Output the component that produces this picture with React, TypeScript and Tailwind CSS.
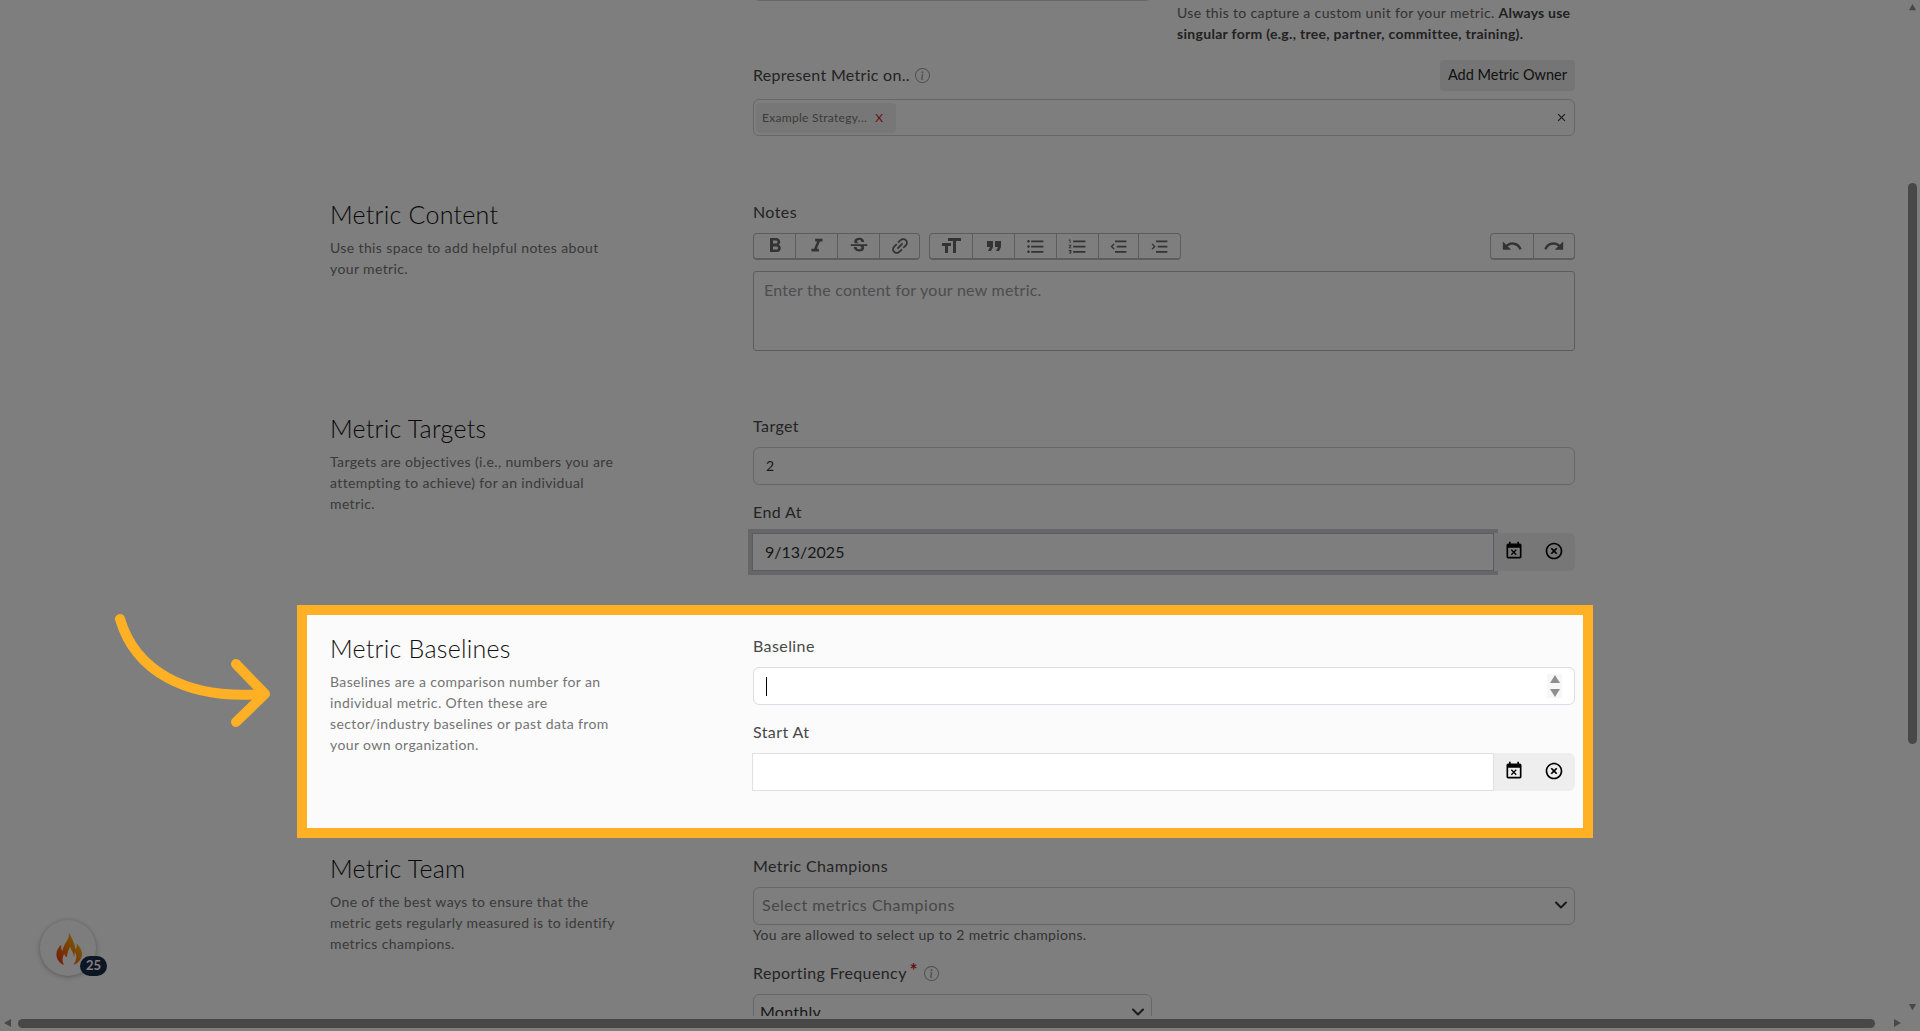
import type { ReactNode } from "react";
import { BsInfoCircle } from "react-icons/bs";
import {
  MdClose,
  MdEventBusy,
  MdFormatBold,
  MdFormatItalic,
  MdFormatListBulleted,
  MdFormatListNumbered,
  MdFormatQuote,
  MdFormatSize,
  MdHighlightOff,
  MdLink,
  MdRedo,
  MdStrikethroughS,
  MdUndo,
} from "react-icons/md";

function Section({
  title,
  lines,
  highlight,
  children,
}: {
  title: string;
  lines: string[];
  highlight?: boolean;
  children: ReactNode;
}) {
  return (
    <section
      className={
        highlight
          ? "relative z-20 mb-[7px] flex bg-[#fbfbfb] pb-[37px] pl-[23px] pr-[8px] pt-[19px] shadow-[0_0_0_10px_#ffb024]"
          : "mb-[7px] flex pb-[37px] pl-[23px] pr-[8px] pt-[19px]"
      }
    >
      <div className="w-[423px] shrink-0">
        <h2 className="text-[25px] font-light leading-[28px] tracking-[0.25px] text-[#111111]">{title}</h2>
        <p className="mt-[9px] text-[14px] leading-[21px] tracking-[0.38px] text-[#747474]">
          {lines.map((l) => (
            <span key={l} className="block whitespace-nowrap">
              {l}
            </span>
          ))}
        </p>
      </div>
      <div className="min-w-0 flex-1">{children}</div>
    </section>
  );
}

function Label({ children, className = "" }: { children: ReactNode; className?: string }) {
  return (
    <div className={`flex h-[24px] items-center text-[16px] tracking-[0.4px] text-[#484848] ${className}`}>
      {children}
    </div>
  );
}

function Chevron() {
  return (
    <svg width="16" height="16" viewBox="0 0 16 16" fill="none" stroke="#333" strokeWidth="2" strokeLinecap="round" strokeLinejoin="round">
      <path d="m3 5.5 5 5 5-5" />
    </svg>
  );
}

function DateRow({ value, focused }: { value?: string; focused?: boolean }) {
  return (
    <div className="mt-[9px] ml-[-1px] flex h-[38px]">
      <div
        className={
          focused
            ? "flex flex-1 items-center border border-[#b4b4c0] pb-[1px] pl-[12px] text-[16px] text-[#333333] outline-4 outline-solid outline-[#cccccc]"
            : "flex flex-1 items-center border border-[#dfe0e6] bg-white pl-[12px]"
        }
      >
        {value}
      </div>
      <div className="relative flex w-[81px] items-center rounded-r-[6px] bg-[#eeeeee] pb-[2px] text-black">
        <MdEventBusy className="ml-[10px] h-[20px] w-[20px]" />
        <MdHighlightOff className="ml-[20px] h-[20px] w-[20px]" />
      </div>
    </div>
  );
}

function ToolGroup({ cells, className = "" }: { cells: { w: number; icon: ReactNode }[]; className?: string }) {
  return (
    <div className={`flex h-[27px] rounded-[4px] border border-b-2 border-[#bbbbbb] text-[#666666] ${className}`}>
      {cells.map((c, i) => (
        <div
          key={i}
          style={{ width: c.w }}
          className="flex items-center justify-center border-r border-[#bbbbbb] last:border-r-0"
        >
          {c.icon}
        </div>
      ))}
    </div>
  );
}

function NestIcon({ increase }: { increase?: boolean }) {
  return (
    <svg width="21" height="21" viewBox="0 0 24 24" fill="currentColor">
      <path d="M8 5h13v2H8zM10 11h11v2H10zM8 17h13v2H8z" />
      <path
        d={increase ? "M3.5 9 6.5 12 3.5 15" : "M7 9 4 12 7 15"}
        fill="none"
        stroke="currentColor"
        strokeWidth="1.6"
      />
    </svg>
  );
}

function Tri({ dir, className = "" }: { dir: "up" | "down" | "left" | "right"; className?: string }) {
  const pts = { up: "5,1 9,8 1,8", down: "1,1 9,1 5,8", left: "8,1 8,9 1,5", right: "2,1 2,9 9,5" }[dir];
  return (
    <svg width="10" height="10" viewBox="0 0 10 10" className={className}>
      <polygon points={pts} fill="#909090" />
    </svg>
  );
}

const sz = "h-[21px] w-[21px]";

export default function App() {
  return (
    <div className="relative h-[1031px] w-[1920px] overflow-hidden bg-[#fcfcfc] font-[Lato,sans-serif]">
      <div className="flex h-[1016px]">
        <div className="w-[1905px] overflow-hidden">
          <div className="ml-[307px] w-[1276px]">
            {/* page is scrolled: this row starts above the fold */}
            <div className="mt-[-37px] pb-[37px] pl-[23px] pr-[8px]">
              <div className="ml-[423px] flex">
                <div className="h-[38px] w-[399px] shrink-0 rounded-[6px] border border-[#cccccc]" />
                <p className="ml-[25px] mt-[39px] h-[42px] whitespace-nowrap text-[14px] leading-[21px] tracking-[0.35px] text-[#666666]">
                  Use this to capture a custom unit for your metric.{" "}
                  <b className="font-bold tracking-[0.2px] text-[#444444]">Always use</b>
                  <br />
                  <b className="font-bold tracking-[0.3px] text-[#444444]">singular form (e.g., tree, partner, committee, training).</b>
                </p>
              </div>
              <div className="ml-[423px] mt-[16px]">
                <div className="flex h-[31px] items-center justify-between">
                  <div className="flex items-center pb-[1px] text-[16px] tracking-[0.3px] text-[#484848]">
                    Represent Metric on..
                    <BsInfoCircle className="ml-[5px] h-[15px] w-[15px] text-[#999999]" />
                  </div>
                  <div className="flex h-[31px] w-[135px] items-center justify-center rounded-[4px] bg-[#ebebeb] pb-[1px] text-[14.5px] text-[#222222]">
                    Add Metric Owner
                  </div>
                </div>
                <div className="mt-[8px] flex h-[37px] items-center rounded-[6px] border border-[#cfcfcf] pl-[2px] pr-[6px]">
                  <div className="flex h-[30px] w-[140px] items-center rounded-[4px] bg-[#eeeeee] pl-[6px] text-[12px] tracking-[0.3px] text-[#777777]">
                    Example Strategy...
                    <span className="ml-[8px] text-[#cc2222]">X</span>
                  </div>
                  <MdClose className="ml-auto h-[13px] w-[13px] text-[#333333]" />
                </div>
              </div>
            </div>

            <div className="mb-[8px]" />

            <Section
              title="Metric Content"
              lines={["Use this space to add helpful notes about", "your metric."]}
            >
              <Label>Notes</Label>
              <div className="mt-[9px] flex">
                <ToolGroup
                  cells={[
                    { w: 42, icon: <MdFormatBold className="h-[24px] w-[24px]" /> },
                    { w: 42, icon: <MdFormatItalic className="h-[22px] w-[22px]" /> },
                    { w: 42, icon: <MdStrikethroughS className="h-[22px] w-[22px]" /> },
                    { w: 39, icon: <MdLink className="h-[22px] w-[22px] -rotate-45" /> },
                  ]}
                />
                <ToolGroup
                  className="ml-[9px]"
                  cells={[
                    { w: 43, icon: <MdFormatSize className="h-[24px] w-[24px]" /> },
                    { w: 42, icon: <MdFormatQuote className="h-[24px] w-[24px]" /> },
                    { w: 42, icon: <MdFormatListBulleted className={sz} /> },
                    { w: 42, icon: <MdFormatListNumbered className={sz} /> },
                    { w: 40, icon: <NestIcon /> },
                    { w: 41, icon: <NestIcon increase /> },
                  ]}
                />
                <ToolGroup
                  className="ml-auto"
                  cells={[
                    { w: 43, icon: <MdUndo className="h-[22px] w-[22px]" /> },
                    { w: 40, icon: <MdRedo className="h-[22px] w-[22px]" /> },
                  ]}
                />
              </div>
              <div className="mt-[11px] h-[80px] rounded-[3px] border border-[#bbbbbb] px-[10px] pt-[6px] text-[16px] leading-[24px] tracking-[0.25px] text-[#9a9a9a]">
                Enter the content for your new metric.
              </div>
            </Section>

            <Section
              title="Metric Targets"
              lines={[
                "Targets are objectives (i.e., numbers you are",
                "attempting to achieve) for an individual",
                "metric.",
              ]}
            >
              <Label>Target</Label>
              <div className="mt-[9px] flex h-[38px] items-center rounded-[6px] border border-[#cfcfcf] pb-[2px] pl-[12px] text-[14px] text-[#333333]">
                2
              </div>
              <Label className="mt-[15px]">End At</Label>
              <DateRow value="9/13/2025" focused />
            </Section>

            <Section
              highlight
              title="Metric Baselines"
              lines={[
                "Baselines are a comparison number for an",
                "individual metric. Often these are",
                "sector/industry baselines or past data from",
                "your own organization.",
              ]}
            >
              <Label>Baseline</Label>
              <div className="mt-[9px] flex h-[38px] items-center rounded-[6px] border border-[#dcdde3] bg-white pl-[12px] pr-[12px]">
                <span className="h-[19px] w-px bg-black" />
                <div className="ml-auto flex h-[24px] w-[15px] flex-col items-center justify-between bg-[#f7f7f7] py-[1px]">
                  <svg width="10" height="8" viewBox="0 0 10 8">
                    <polygon points="5,0 10,8 0,8" fill="#8f8f8f" />
                  </svg>
                  <svg width="10" height="8" viewBox="0 0 10 8">
                    <polygon points="0,0 10,0 5,8" fill="#8f8f8f" />
                  </svg>
                </div>
              </div>
              <Label className="mt-[15px]">Start At</Label>
              <DateRow />
            </Section>

            <Section
              title="Metric Team"
              lines={[
                "One of the best ways to ensure that the",
                "metric gets regularly measured is to identify",
                "metrics champions.",
              ]}
            >
              <Label>Metric Champions</Label>
              <div className="mt-[9px] flex h-[38px] items-center justify-between rounded-[6px] border border-[#cfcfcf] pb-[2px] pl-[8px] pr-[5px] text-[16px] tracking-[0.5px] text-[#8f8f8f]">
                Select metrics Champions
                <Chevron />
              </div>
              <p className="mt-[-1px] pb-[1px] text-[14px] leading-[21px] tracking-[0.35px] text-[#666666]">
                You are allowed to select up to 2 metric champions.
              </p>
              <Label className="mt-[15px]">
                Reporting Frequency
                <span className="ml-[3px] mt-[-6px] text-[18px] font-bold leading-[18px] text-[#cc2222]">*</span>
                <BsInfoCircle className="ml-[6px] h-[15px] w-[15px] text-[#999999]" />
              </Label>
              <div className="mt-[9px] flex h-[38px] w-[399px] items-center justify-between rounded-[6px] border border-[#cfcfcf] pb-[2px] pl-[6px] pr-[5px] text-[16px] tracking-[0.25px] text-[#333333]">
                Monthly
                <Chevron />
              </div>
            </Section>
          </div>
        </div>

        {/* vertical scrollbar */}
        <div className="flex w-[15px] flex-col pl-[3px]">
          <Tri dir="up" className="mt-[3px] h-[9px] w-[9px]" />
          <div className="mt-[171px] h-[561px] w-[9px] rounded-full bg-[#909090]" />
          <Tri dir="down" className="mt-[259px] h-[9px] w-[9px]" />
        </div>
      </div>

      {/* horizontal scrollbar */}
      <div className="flex h-[15px] items-start pt-[3px]">
        <Tri dir="left" className="ml-[3px] mt-[-1px] h-[10px] w-[10px]" />
        <div className="ml-[5px] h-[9px] w-[1857px] rounded-full bg-[#909090]" />
        <Tri dir="right" className="ml-[17px] mt-[-1px] h-[10px] w-[10px]" />
      </div>

      {/* floating streak widget */}
      <div className="absolute left-[40px] top-[920px] flex h-[56px] w-[56px] items-center justify-center rounded-full bg-[#fbfbfb] shadow-[0_1px_5px_rgba(0,0,0,0.3)]">
        <svg width="27" height="33" viewBox="0 0 100 100" preserveAspectRatio="none">
          <defs>
            <linearGradient id="flame" x1="0" y1="1" x2="1" y2="0">
              <stop offset="0" stopColor="#e8300a" />
              <stop offset="0.55" stopColor="#f58a0b" />
              <stop offset="1" stopColor="#ffce0a" />
            </linearGradient>
          </defs>
          <path
            fill="url(#flame)"
            d="M50 0C55 15 45 25 38 35C32 45 28 50 28 58C22 52 22 45 24 38C10 48 0 62 8 80C14 92 25 98 34 100C26 90 26 78 34 66C36 72 40 76 44 76C46 62 52 52 56 44C60 58 70 62 70 76C72 72 74 66 72 60C82 68 82 84 68 100C84 96 98 84 100 70C102 56 90 44 80 34C82 42 80 48 76 52C74 34 62 18 50 0Z"
          />
        </svg>
        <span className="absolute left-[40px] top-[36px] flex h-[20px] w-[27px] items-center justify-center rounded-full bg-[#1c2c48] text-[13px] font-bold text-white">
          25
        </span>
      </div>

      {/* tour overlay */}
      <div className="absolute inset-0 z-10 bg-black/50" />

      <svg
        className="absolute left-[110px] top-[610px] z-30"
        width="170"
        height="125"
        viewBox="110 610 170 125"
        fill="none"
        stroke="#ffb024"
        strokeWidth="10"
        strokeLinecap="round"
        strokeLinejoin="round"
      >
        <path d="M120 619C135 670 185 700 262 694" />
        <path d="M236 664L265 694L236 722" />
      </svg>
    </div>
  );
}
